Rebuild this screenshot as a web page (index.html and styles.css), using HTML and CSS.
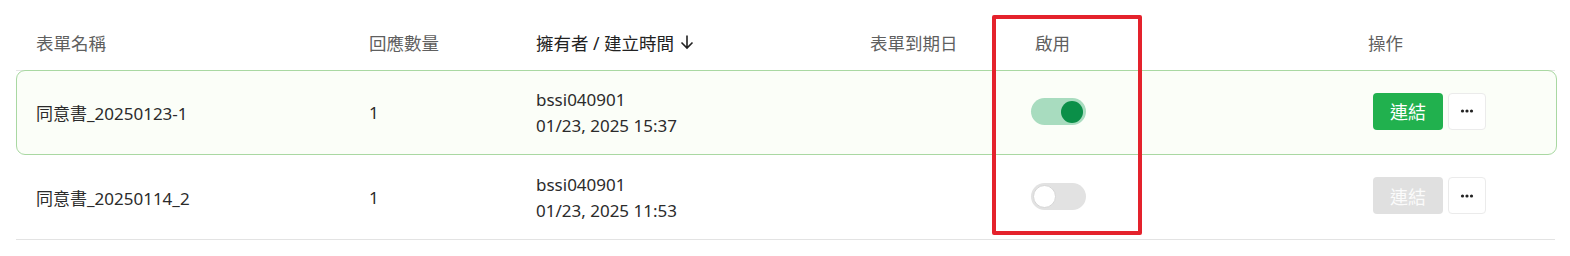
FILE: index.html
```html
<!DOCTYPE html>
<html lang="zh-Hant">
<head>
<meta charset="utf-8">
<link rel="stylesheet" href="styles.css">
</head>
<body>
<div class="page">
  <div class="table">
    <div class="row head">
      <div class="cell">表單名稱</div>
      <div class="cell">回應數量</div>
      <div class="cell sorted">擁有者 / 建立時間 <span class="arrow"><svg width="14" height="16" viewBox="0 0 14 16"><path d="M7 1.5v12.5M1.5 8.5l5.5 5.5 5.5-5.5" fill="none" stroke="#222" stroke-width="1.6"/></svg></span></div>
      <div class="cell">表單到期日</div>
      <div class="cell enable-h">啟用</div>
      <div class="cell">操作</div>
    </div>
    <div class="row body active">
      <div class="cell">同意書_20250123-1</div>
      <div class="cell">1</div>
      <div class="cell owner"><div>bssi040901</div><div>01/23, 2025 15:37</div></div>
      <div class="cell"></div>
      <div class="cell"><span class="toggle on"><span class="knob"></span></span></div>
      <div class="cell ops"><button class="btn link">連結</button><button class="btn more"><svg width="14" height="4" viewBox="0 0 14 4"><circle cx="2.5" cy="2" r="1.6"/><circle cx="7" cy="2" r="1.6"/><circle cx="11.5" cy="2" r="1.6"/></svg></button></div>
    </div>
    <div class="row body last">
      <div class="cell">同意書_20250114_2</div>
      <div class="cell">1</div>
      <div class="cell owner"><div>bssi040901</div><div>01/23, 2025 11:53</div></div>
      <div class="cell"></div>
      <div class="cell"><span class="toggle off"><span class="knob"></span></span></div>
      <div class="cell ops"><button class="btn link disabled">連結</button><button class="btn more"><svg width="14" height="4" viewBox="0 0 14 4"><circle cx="2.5" cy="2" r="1.6"/><circle cx="7" cy="2" r="1.6"/><circle cx="11.5" cy="2" r="1.6"/></svg></button></div>
    </div>
  </div>
  <div class="highlight"></div>
</div>
</body>
</html>
```
FILE: styles.css
```css
* { box-sizing: border-box; }
html, body { margin: 0; padding: 0; background: #fff; }
body {
  font-family: "Noto Sans", "Noto Sans CJK TC", sans-serif;
  font-size: 17px;
  color: #2b2b2b;
}
.page { position: relative; width: 1570px; height: 256px; }
.table { margin-left: 16px; width: 1541px; }
.row {
  display: grid;
  grid-template-columns: 333px 167px 334px 161px 337px 1fr;
  padding-left: 20px;
  align-items: center;
}
.head {
  height: 71px;
  padding-top: 14px;
  color: #5f5f5f;
  font-size: 17.5px;
  border-bottom: 1px solid #e6e6e6;
  margin-right: 2px;
}
.head .sorted { color: #222; display: flex; align-items: center; gap: 6px; }
.arrow { display: inline-flex; }
.head .enable-h { padding-left: 4px; }
.body { height: 85px; border: 1px solid transparent; padding-left: 19px; }
.active {
  height: 85px;
  border: 1px solid #a9d8a2;
  border-radius: 9px;
  background: #fbfef8;
  margin-top: -1px;
}
.last { border-bottom: 1px solid #e3e3e3; border-left: 0; border-right: 0; border-top: 0; margin-right: 2px; padding-left: 20px; }
.owner { line-height: 26px; padding-top: 1px; }
.toggle {
  display: flex;
  align-items: center;
  width: 55px;
  height: 27px;
  border-radius: 14px;
  padding: 0 3px;
  margin-top: -2px;
}
.toggle.on { background: #a8dcbf; justify-content: flex-end; }
.toggle.off { background: #e2e2e2; justify-content: flex-start; padding: 0 2px; }
.knob { width: 22px; height: 22px; border-radius: 50%; }
.on .knob { background: #0a8f48; }
.off .knob { background: #fff; border: 1px solid #d6d6d6; width: 23px; height: 23px; }
.ops { display: flex; gap: 5px; padding-left: 5px; margin-top: -3px; }
.btn {
  height: 37px;
  border-radius: 4px;
  font-family: "Noto Sans CJK TC", sans-serif;
  display: flex; align-items: center; justify-content: center;
  padding: 0;
}
.link { width: 70px; background: #21b14e; border: 0; color: #fff; font-size: 18px; }
.link.disabled { background: #e0e0e0; color: #fbfbfb; }
.more { width: 38px; background: #fff; border: 1px solid #ebebeb; }
.more svg { fill: #222; }
.highlight {
  position: absolute;
  left: 992px;
  top: 15px;
  width: 150px;
  height: 220px;
  border: 4px solid #e4222c;
  border-radius: 2px;
}
```
